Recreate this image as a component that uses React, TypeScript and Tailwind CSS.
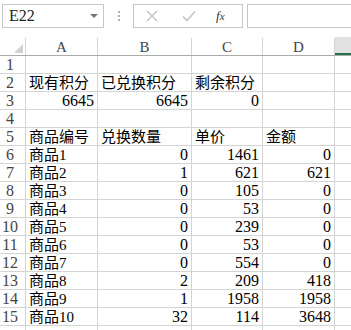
import React from "react";

const font = { fontFamily: '"Liberation Serif", "Noto Sans CJK SC", serif' };

type Cell = { v: string; num?: boolean };

const items = [
  [0, 1461, 0],
  [1, 621, 621],
  [0, 105, 0],
  [0, 53, 0],
  [0, 239, 0],
  [0, 53, 0],
  [0, 554, 0],
  [2, 209, 418],
  [1, 1958, 1958],
  [32, 114, 3648],
];

const rows: Cell[][] = [
  [],
  [{ v: "现有积分" }, { v: "已兑换积分" }, { v: "剩余积分" }],
  [{ v: "6645", num: true }, { v: "6645", num: true }, { v: "0", num: true }],
  [],
  [{ v: "商品编号" }, { v: "兑换数量" }, { v: "单价" }, { v: "金额" }],
  ...items.map((r, i) => [
    { v: `商品${i + 1}` },
    { v: String(r[0]), num: true },
    { v: String(r[1]), num: true },
    { v: String(r[2]), num: true },
  ]),
];

const colW = ["w-[72px]", "w-[94px]", "w-[71px]", "w-[72px]"];

export default function App() {
  return (
    <div className="h-[330px] w-[351px] overflow-hidden bg-white text-black" style={font}>
      {/* formula bar */}
      <div className="flex h-[36px] items-start pt-[4px]">
        <div className="ml-[2px] flex h-[24px] w-[102px] items-center justify-between border border-[#c6c6c6] pl-[6px] pr-[5px] text-[16px] text-[#222]">
          <span>E22</span>
          <span className="h-0 w-0 border-x-[4px] border-t-[4px] border-x-transparent border-t-[#777]" />
        </div>
        <div className="ml-[14px] mt-[7px] flex flex-col gap-[2px]">
          <span className="h-[2px] w-[2px] bg-[#b4b4b4]" />
          <span className="h-[2px] w-[2px] bg-[#b4b4b4]" />
          <span className="h-[2px] w-[2px] bg-[#b4b4b4]" />
        </div>
        <div className="ml-[13px] flex h-[24px] w-[110px] items-center border border-[#c6c6c6]">
          <svg width="12" height="12" viewBox="0 0 12 12" className="ml-[12px]">
            <path d="M1 1L11 11M11 1L1 11" stroke="#c4c4c4" strokeWidth="1.4" />
          </svg>
          <svg width="14" height="12" viewBox="0 0 14 12" className="ml-[24px]">
            <path d="M1 6.5L5 10.5L13 1.5" stroke="#c4c4c4" strokeWidth="1.6" fill="none" />
          </svg>
          <span className="ml-[20px] text-[13px] italic text-[#333]">
            f<span className="text-[11px]">x</span>
          </span>
        </div>
        <div className="ml-[4px] h-[24px] flex-1 border border-r-0 border-[#c6c6c6]" />
      </div>

      {/* column headers */}
      <div className="flex h-[20px] border-b border-[#ababab] text-[15px] leading-none text-[#444]">
        <div className="relative mt-[2px] w-[26px] border-r border-[#d4d4d4]">
          <span className="absolute bottom-[2px] right-[2px] h-0 w-0 border-b-[9px] border-l-[9px] border-b-[#d0d0d0] border-l-transparent" />
        </div>
        {["A", "B", "C", "D"].map((c, i) => (
          <div
            key={c}
            className={`${colW[i]} mt-[2px] flex items-center justify-center border-r border-[#d4d4d4] pt-[2px]`}
          >
            {c}
          </div>
        ))}
        <div className="mt-[1px] flex-1 border-b-2 border-[#217346] bg-[#e1e1e1]" />
      </div>

      {/* rows */}
      {rows.map((r, i) => (
        <div key={i} className="flex h-[18px] border-b border-[#d4d4d4] text-[15px] leading-[16px]">
          <div className="flex w-[26px] items-end justify-center border-r border-[#d4d4d4] pr-[5px] text-[16px] text-[#444]">
            {i + 1}
          </div>
          {colW.map((w, j) => {
            const c = r[j];
            return (
              <div
                key={j}
                className={`${w} flex items-end whitespace-nowrap border-r border-[#d4d4d4] px-[3px] ${
                  c?.num ? "justify-end text-[16px]" : "justify-start"
                }`}
              >
                {c?.v ?? ""}
              </div>
            );
          })}
          <div className="flex-1" />
        </div>
      ))}
      <div className="flex h-[18px]">
        <div className="w-[26px] border-r border-[#d4d4d4]" />
        {colW.map((w, j) => (
          <div key={j} className={`${w} border-r border-[#d4d4d4]`} />
        ))}
      </div>
    </div>
  );
}
